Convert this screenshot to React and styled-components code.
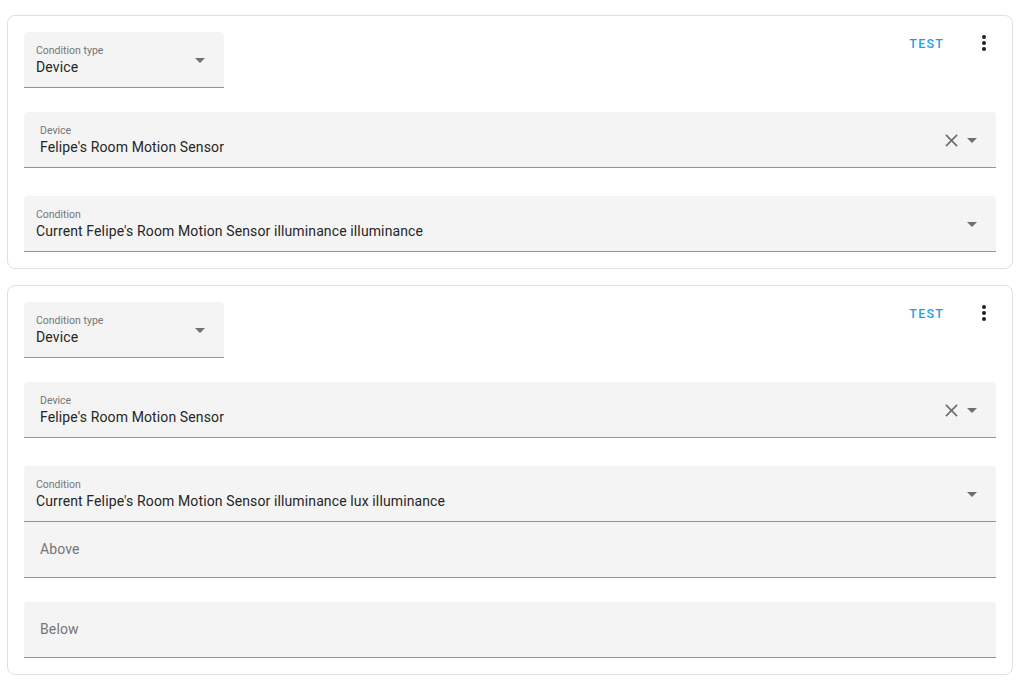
import styled, { createGlobalStyle } from 'styled-components'

const GlobalStyle = createGlobalStyle`
    body {
        margin: 0;
        background: #fff;
        font-family: Roboto, "Noto Sans", sans-serif;
        color: #212121;
    }
`

const Page = styled.div`
    display: flex;
    flex-direction: column;
    gap: 16px;
    padding: 15px 10px 0 7px;
`
const Card = styled.div`
    position: relative;
    display: flex;
    flex-direction: column;
    padding: 16px;
    border: 1px solid #e0e0e0;
    border-radius: 8px;
    background: #fff;
`
const CardActions = styled.div`
    position: absolute;
    top: 15px;
    right: 16px;
    display: flex;
    align-items: center;
    gap: 28px;
`
const TestButton = styled.span`
    font-size: 12.5px;
    font-weight: 500;
    letter-spacing: 1.2px;
    color: #1a9fe8;
    padding: 4px 0;
`
const MenuDots = styled.span`
    display: flex;
    width: 24px;
    height: 24px;
    align-items: center;
    justify-content: center;
    color: #212121;
`
const Field = styled.div`
    display: flex;
    align-items: center;
    width: ${({ $width }) => $width || 'auto'};
    height: 56px;
    box-sizing: border-box;
    margin-top: ${({ $gap }) => $gap || 0}px;
    padding: 0 19px 0 ${({ $inset }) => $inset || 12}px;
    background: #f4f4f4;
    border-bottom: 1px solid #949494;
    border-radius: ${({ $flat }) => ($flat ? '0' : '4px 4px 0 0')};
`
const FieldText = styled.div`
    flex: 1;
    display: flex;
    flex-direction: column;
    padding-top: 2px;
`
const Label = styled.span`
    font-size: 10.5px;
    line-height: 14px;
    color: #757575;
`
const Value = styled.span`
    font-size: 14px;
    line-height: 19px;
    letter-spacing: 0.12px;
    color: #262626;
`
const Placeholder = styled.span`
    font-size: 14px;
    letter-spacing: 0.12px;
    color: #757575;
    margin-left: 4px;
    margin-top: -1px;
`
const Icons = styled.div`
    display: flex;
    align-items: center;
    gap: 9px;
    color: #757575;
    margin-top: 2px;
`

const Arrow = () => (
    <svg width="10" height="5" viewBox="0 0 10 5">
        <path d="M0 0 L10 0 L5 5 Z" fill="#6f6f6f" />
    </svg>
)

const Clear = () => (
    <svg width="13" height="13" viewBox="0 0 14 14">
        <path d="M1 1 L13 13 M13 1 L1 13" stroke="#6f6f6f" strokeWidth="1.8" />
    </svg>
)

const Dots = () => (
    <svg width="6" height="16" viewBox="0 0 6 16">
        <circle cx="3" cy="2" r="2" fill="#212121" />
        <circle cx="3" cy="8" r="2" fill="#212121" />
        <circle cx="3" cy="14" r="2" fill="#212121" />
    </svg>
)

const SelectField = ({ label, value, width, gap, inset, clearable }) => (
    <Field $width={width} $gap={gap} $inset={inset}>
        <FieldText>
            <Label>{label}</Label>
            <Value>{value}</Value>
        </FieldText>
        <Icons>
            {clearable && <Clear />}
            <Arrow />
        </Icons>
    </Field>
)

const ConditionCard = ({ condition, extra }) => (
    <Card>
        <CardActions>
            <TestButton>TEST</TestButton>
            <MenuDots><Dots /></MenuDots>
        </CardActions>
        <SelectField label="Condition type" value="Device" width="200px" />
        <SelectField label="Device" value="Felipe's Room Motion Sensor" gap={24} inset={16} clearable />
        <SelectField label="Condition" value={condition} gap={28} />
        {extra && (
            <>
                <Field $flat>
                    <Placeholder>Above</Placeholder>
                </Field>
                <Field $gap={24}>
                    <Placeholder>Below</Placeholder>
                </Field>
            </>
        )}
    </Card>
)

const App = () => (
    <>
        <GlobalStyle />
        <Page>
            <ConditionCard condition="Current Felipe's Room Motion Sensor illuminance illuminance" />
            <ConditionCard condition="Current Felipe's Room Motion Sensor illuminance lux illuminance" extra />
        </Page>
    </>
)

export default App
